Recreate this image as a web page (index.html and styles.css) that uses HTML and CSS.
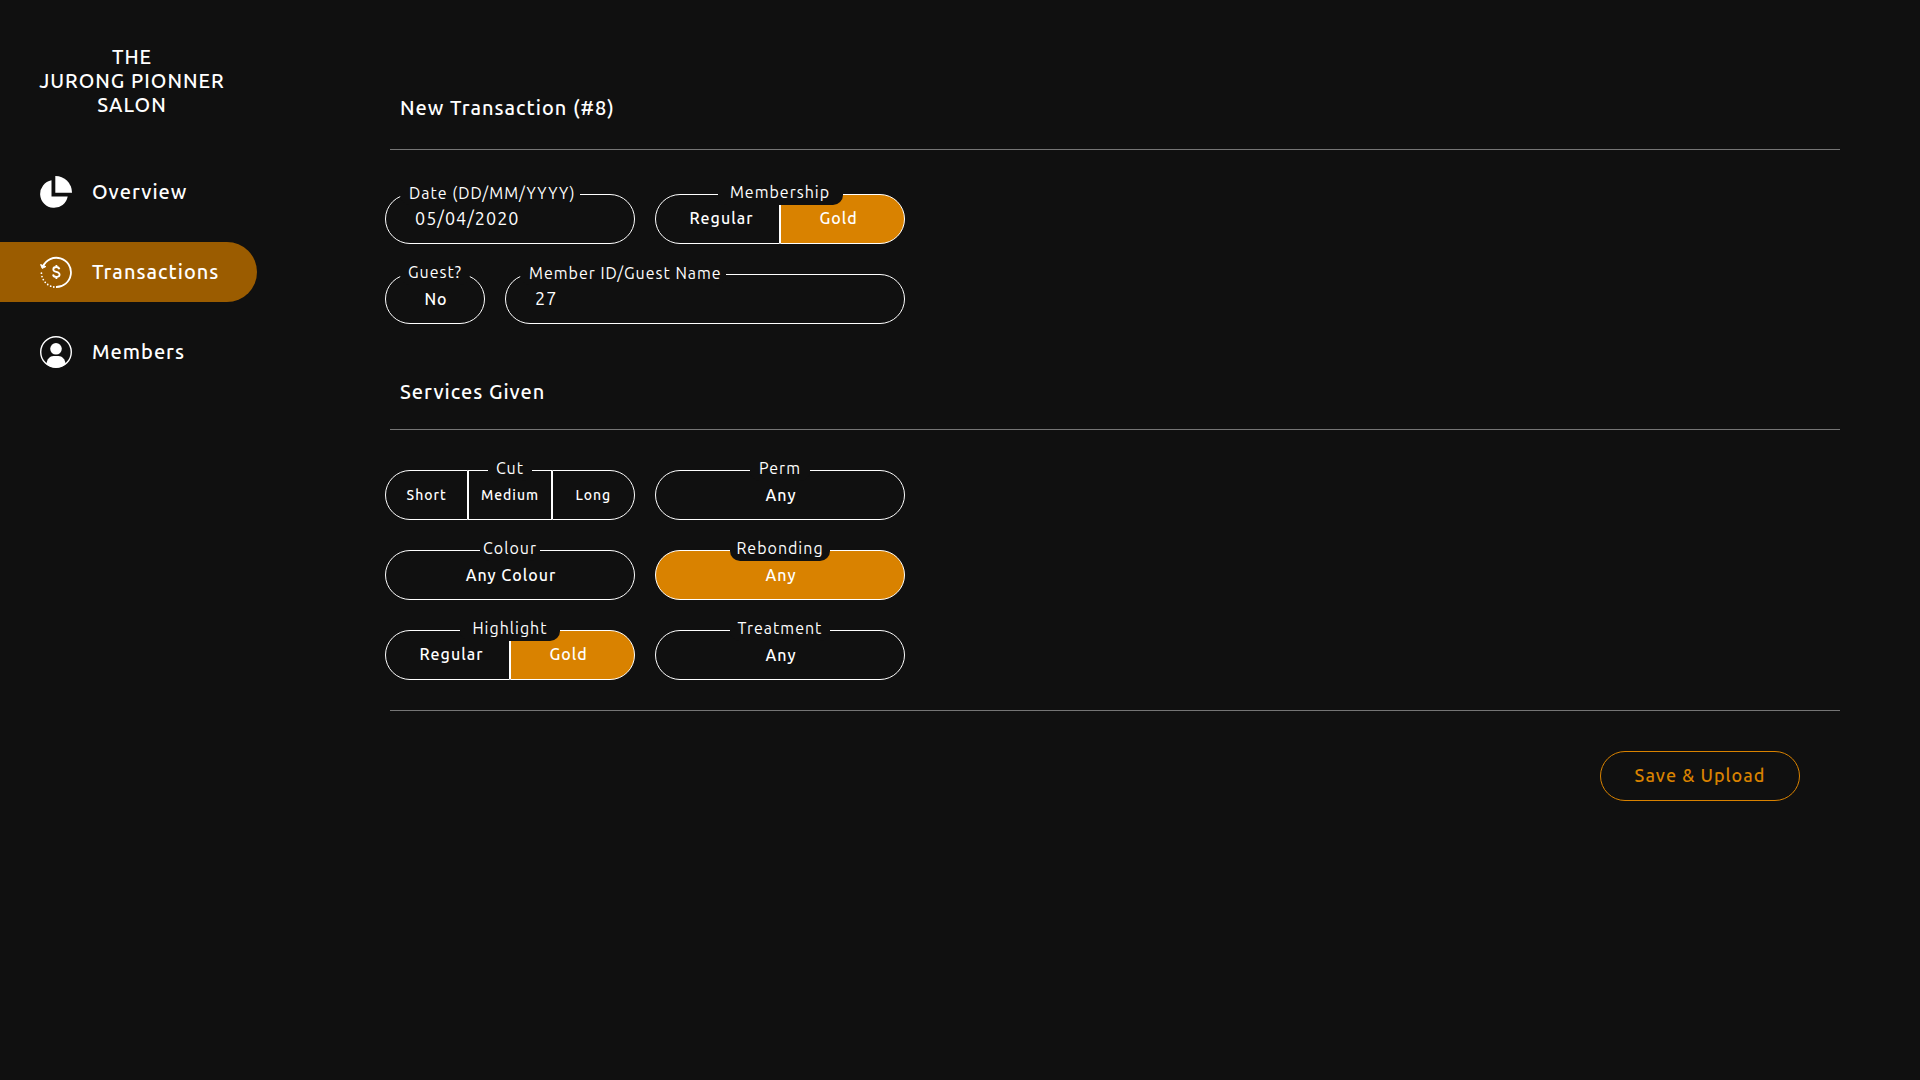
FILE: index.html
```html
<!DOCTYPE html>
<html lang="en">
<head>
<meta charset="utf-8">
<meta name="viewport" content="width=device-width, initial-scale=1">
<title>New Transaction</title>
<link rel="stylesheet" href="styles.css">
</head>
<body>
<aside class="sidebar">
  <div class="brand">THE<br>JURONG PIONNER<br>SALON</div>
  <nav class="nav">
    <a class="nav-link" href="#overview">
      <svg class="icon" viewBox="0 0 32 32" fill="#fff" aria-hidden="true">
        <path d="M11.500 4.300V20.500H27.700A13.900 13.900 0 1 1 11.500 4.300Z"/>
        <path d="M15.300 0A16.600 16.600 0 0 1 32 16.700H15.300Z"/>
      </svg>
      Overview
    </a>
    <a class="nav-link active" href="#transactions" aria-current="page">
      <svg class="icon" viewBox="0 0 32 32" fill="none" stroke="#fff" aria-hidden="true">
        <path stroke-width="1.800" d="M3 10.500A14.600 14.600 0 1 1 16 31"/>
        <path stroke-width="1.800" stroke-linecap="round" stroke-dasharray="0 3.300" d="M13.800 31A14.800 14.800 0 0 1 1.600 14"/>
        <path fill="#fff" stroke-linejoin="round" d="M.600 8.600 2.200 12.400 5.900 10.600Z"/>
        <path stroke-width="1.800" d="M19.400 13.200C19 11.500 17.800 11 16.300 11 14.600 11 13.300 11.900 13.300 13.400 13.300 16.800 19.600 15 19.600 18.600 19.600 20.200 18.200 21 16.400 21 14.500 21 13.300 20.200 13 18.500M16.400 9V11M16.400 21V23"/>
      </svg>
      Transactions
    </a>
    <a class="nav-link" href="#members">
      <svg class="icon" viewBox="0 0 32 32" aria-hidden="true">
        <circle cx="16" cy="16" r="15.300" fill="none" stroke="#fff" stroke-width="1.400"/>
        <circle cx="16" cy="12.800" r="5.800" fill="#fff"/>
        <path fill="#fff" d="M6.500 28.200C6.800 23 10 20 13.500 20H18.500C22 20 25.200 23 25.500 28.200A15.400 15.400 0 0 1 6.500 28.200Z"/>
      </svg>
      Members
    </a>
  </nav>
</aside>
<main class="main">
  <form>
    <h1 class="title">New Transaction (#8)</h1>
    <section class="block">
      <div class="row">
        <div class="field">
          <input class="entry" id="date" type="text" value="05/04/2020">
          <label class="caption caption-left" for="date">Date (DD/MM/YYYY)</label>
        </div>
        <div class="field halves" role="group" aria-labelledby="membership">
          <button class="option" type="button" aria-pressed="false">Regular</button>
          <button class="option" type="button" aria-pressed="true">Gold</button>
          <span class="caption w-xl" id="membership">Membership</span>
        </div>
      </div>
      <div class="row">
        <div class="field field-small">
          <button class="option" id="guest" type="button" aria-pressed="false">No</button>
          <label class="caption w-m" for="guest">Guest?</label>
        </div>
        <div class="field field-wide">
          <input class="entry" id="member" type="text" value="27">
          <label class="caption caption-left" for="member">Member ID/Guest Name</label>
        </div>
      </div>
    </section>
    <h2 class="title title-sub">Services Given</h2>
    <section class="block">
      <div class="row">
        <div class="field thirds" role="group" aria-labelledby="cut">
          <button class="option" type="button" aria-pressed="false">Short</button>
          <button class="option" type="button" aria-pressed="false">Medium</button>
          <button class="option" type="button" aria-pressed="false">Long</button>
          <span class="caption w-xs" id="cut">Cut</span>
        </div>
        <div class="field">
          <button class="option" id="perm" type="button" aria-pressed="false">Any</button>
          <label class="caption w-s" for="perm">Perm</label>
        </div>
      </div>
      <div class="row">
        <div class="field">
          <button class="option" id="colour" type="button" aria-pressed="false">Any Colour</button>
          <label class="caption w-s" for="colour">Colour</label>
        </div>
        <div class="field">
          <button class="option" id="rebonding" type="button" aria-pressed="true">Any</button>
          <label class="caption w-l" for="rebonding">Rebonding</label>
        </div>
      </div>
      <div class="row">
        <div class="field halves" role="group" aria-labelledby="highlight">
          <button class="option" type="button" aria-pressed="false">Regular</button>
          <button class="option" type="button" aria-pressed="true">Gold</button>
          <span class="caption w-l" id="highlight">Highlight</span>
        </div>
        <div class="field">
          <button class="option" id="treatment" type="button" aria-pressed="false">Any</button>
          <label class="caption w-l" for="treatment">Treatment</label>
        </div>
      </div>
    </section>
    <div class="actions">
      <button class="save" type="submit">Save &amp; Upload</button>
    </div>
  </form>
</main>
</body>
</html>
```
FILE: styles.css
```css
:root {
  --bg: #101010;
  --gold: #d98200;
  --gold-dark: #9b5c00;
  --rule: #757575;
}

* {
  box-sizing: border-box;
}

body {
  margin: 0;
  min-height: 100vh;
  display: flex;
  background: var(--bg);
  color: #fff;
  font: 16px/24px Ubuntu, "Noto Sans", sans-serif;
  letter-spacing: 1px;
}

button,
input {
  font: inherit;
  letter-spacing: inherit;
  color: inherit;
}

.sidebar {
  flex: 0 0 257px;
  padding-top: 45px;
}

.brand {
  padding-left: 7px;
  text-align: center;
  font-size: 20px;
  font-weight: 500;
}

.nav {
  display: flex;
  flex-direction: column;
  gap: 20px;
  margin-top: 45px;
}

.nav-link {
  display: flex;
  align-items: center;
  gap: 20px;
  height: 60px;
  padding: 0 0 1px 40px;
  border-radius: 0 30px 30px 0;
  color: #fff;
  font-size: 20px;
  font-weight: 500;
  text-decoration: none;
}

.nav-link.active {
  background: var(--gold-dark);
}

.icon {
  width: 32px;
  height: 32px;
}

.main {
  flex: 1;
  padding: 96px 80px 40px 128px;
}

.title {
  margin: 0 0 0 5px;
  padding: 0 10px 29px;
  border-bottom: 1px solid var(--rule);
  font-size: 20px;
  font-weight: 500;
  line-height: 24px;
}

.title-sub {
  padding-bottom: 25px;
}

.block {
  display: flex;
  flex-direction: column;
  gap: 30px;
  padding: 44px 0 56px;
}

.block:last-of-type {
  padding: 40px 0 30px;
}

.row {
  display: flex;
  gap: 20px;
}

.field {
  position: relative;
  display: flex;
  width: 250px;
  height: 50px;
}

.field-small {
  width: 100px;
}

.field-wide {
  width: 400px;
}

.entry {
  width: 100%;
  padding: 0 29px 2px;
  border: 1px solid #fff;
  border-radius: 25px;
  background: none;
  font-size: 18px;
}

.option {
  flex: 1 1 0;
  min-width: 0;
  padding: 0 0 0 2px;
  border: 1px solid #fff;
  background: none;
  font-weight: 500;
}

.option:first-child {
  border-radius: 25px 0 0 25px;
}

.option:nth-last-child(2) {
  border-radius: 0 25px 25px 0;
}

.option:first-child:nth-last-child(2) {
  border-radius: 25px;
}

.option[aria-pressed="true"] {
  background: var(--gold);
}

.halves .option:first-child {
  padding: 0 0 2px 8px;
}

.halves .option:nth-last-child(2) {
  padding: 0 8px 2px 0;
}

.thirds .option {
  padding: 0;
  font-size: 14px;
}

.caption {
  position: absolute;
  top: -14px;
  left: 0;
  right: 0;
  height: 25px;
  margin: 0 auto;
  border-radius: 0 0 10px 10px;
  background: var(--bg);
  text-align: center;
  white-space: nowrap;
}

.caption-left {
  top: -13px;
  left: 15px;
  right: auto;
  height: 24px;
  padding: 0 4px 0 9px;
}

.w-xs { width: 44px; }
.w-s { width: 60px; }
.w-m { width: 70px; }
.w-l { width: 100px; }
.w-xl { width: 125px; }

.actions {
  display: flex;
  justify-content: flex-end;
  margin-left: 5px;
  padding: 40px 40px 0;
  border-top: 1px solid var(--rule);
}

.save {
  width: 200px;
  height: 50px;
  padding: 0 0 3px;
  border: 1px solid var(--gold);
  border-radius: 25px;
  background: none;
  color: var(--gold);
  font-size: 18px;
  font-weight: 500;
}
```
